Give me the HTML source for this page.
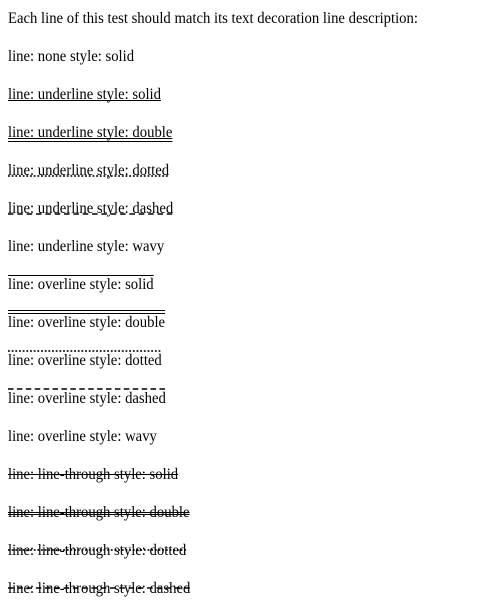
<!DOCTYPE html>
<html><head><style>
html,body{margin:0;padding:0;background:#fff}
body{padding:8px 8px 0 8px}
.w{transform:scaleX(0.918);transform-origin:0 0;width:560px}
p{margin:0 0 16px 0;height:22px;line-height:22px;font-family:"Liberation Serif",serif;font-size:16px;color:#000}
span{text-decoration-color:#000;text-decoration-thickness:1px;text-decoration-skip-ink:none}
</style></head><body><div class="w">
<p>Each line of this test should match its text decoration line description:</p>
<p><span>line: none style: solid</span></p>
<p><span style="text-decoration:underline solid">line: underline style: solid</span></p>
<p><span style="text-decoration:underline double">line: underline style: double</span></p>
<p><span style="text-decoration:underline dotted">line: underline style: dotted</span></p>
<p><span style="text-decoration:underline dashed">line: underline style: dashed</span></p>
<p><span>line: underline style: wavy</span></p>
<p><span style="text-decoration:overline solid">line: overline style: solid</span></p>
<p><span style="text-decoration:overline double">line: overline style: double</span></p>
<p><span style="text-decoration:overline dotted">line: overline style: dotted</span></p>
<p><span style="text-decoration:overline dashed">line: overline style: dashed</span></p>
<p><span>line: overline style: wavy</span></p>
<p><span style="text-decoration:line-through solid">line: line-through style: solid</span></p>
<p><span style="text-decoration:line-through double">line: line-through style: double</span></p>
<p><span style="text-decoration:line-through dotted">line: line-through style: dotted</span></p>
<p><span style="text-decoration:line-through dashed">line: line-through style: dashed</span></p>
</div></body></html>
